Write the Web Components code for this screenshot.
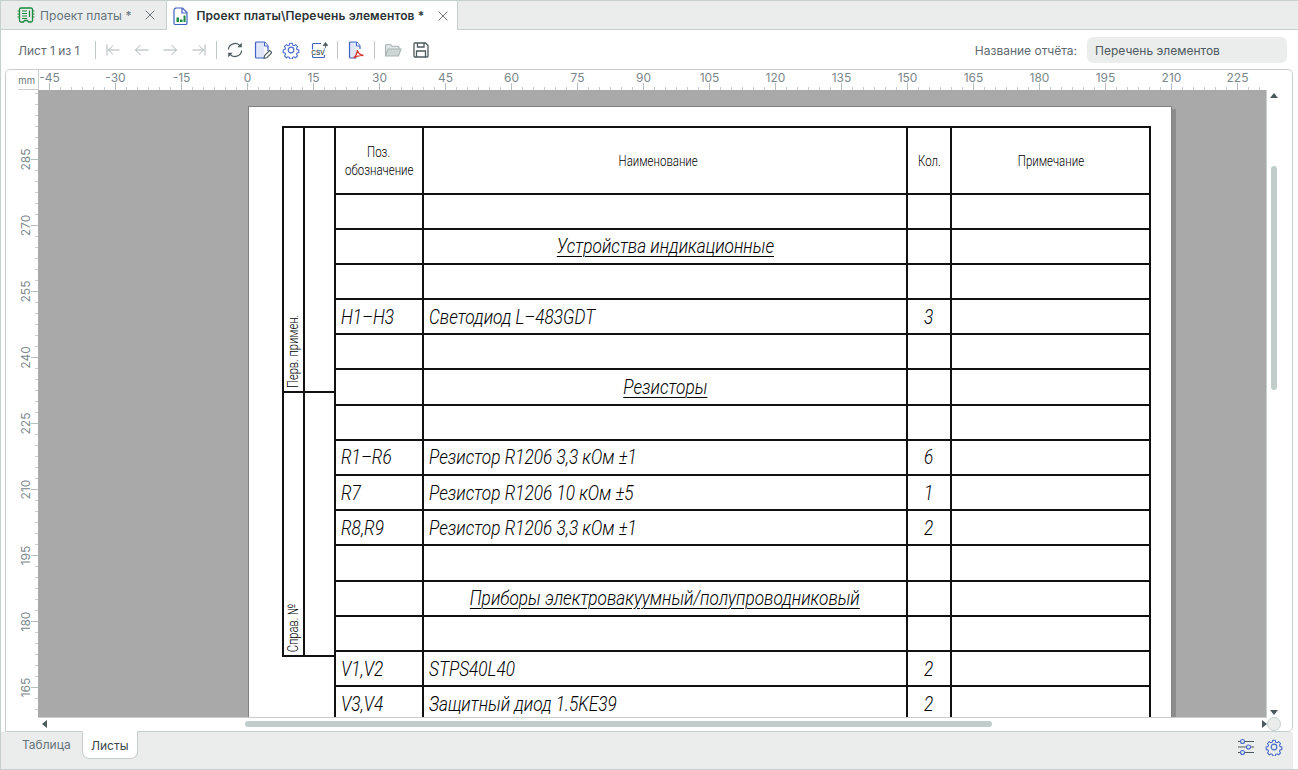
<!DOCTYPE html>
<html lang="ru">
<head>
<meta charset="utf-8">
<title>Перечень элементов</title>
<style>
    html, body { margin: 0; height: 100%; overflow: hidden; background: #fff; }
    body { font-family: Inter, "Liberation Sans", sans-serif; }
</style>
</head>
<body>
<app-window>
    <tab-bar slot="tabs">
        <doc-tab icon="board" label="Проект платы *"></doc-tab>
        <doc-tab icon="report" label="Проект платы\Перечень элементов *" active></doc-tab>
    </tab-bar>
    <report-toolbar slot="toolbar"></report-toolbar>
    <report-panel slot="panel">
        <sheet-page></sheet-page>
    </report-panel>
    <bottom-bar slot="bottom"></bottom-bar>
</app-window>

<script>
const ICONS = {
    board: `<path d="M4 2h10a1.500 1.500 0 0 1 1.500 1.500v11a1.500 1.500 0 0 1-1.500 1.500h-2.500l-1-1.500h-3l-1 1.500h-2.500a1.500 1.500 0 0 1-1.500-1.500v-11a1.500 1.500 0 0 1 1.500-1.500z" fill="none" stroke="#1b8a3c" stroke-width="1.300"/>
        <path d="M.5 5h2M.5 8h2M.5 11h2M15.500 5h2M15.500 8h2M15.500 11h2M5 5h5M5 7.500h5M5 10h5M12.500 4.500v6.500M5 12.500h5" fill="none" stroke="#1b8a3c" stroke-width="1.200"/>`,
    report: `<path d="M3.500 1h7l4.500 4.500v10.500a1.500 1.500 0 0 1-1.500 1.500h-10a1.500 1.500 0 0 1-1.500-1.500v-13a1.500 1.500 0 0 1 1.500-1.500z" fill="#fff" stroke="#3f62c4" stroke-width="1.200"/>
        <path d="M10 1v5h5" fill="none" stroke="#3f62c4" stroke-width="1.200"/>
        <path d="M4.500 10.500h2.500v4.500h-2.500zM8 12.500h2.500v2.500h-2.500zM11.500 8.500h2v6.500h-2z" fill="#1b8a3c"/>`,
    first: `<path d="M2 3.500v11M14.500 9h-11M8 4.500l-4.500 4.500 4.500 4.500" fill="none" stroke="#a9b3b5" stroke-width="1"/>`,
    prev: `<path d="M15.500 9h-13M7.500 4l-5 5 5 5" fill="none" stroke="#a9b3b5" stroke-width="1"/>`,
    next: `<path d="M2.500 9h13M10.500 4l5 5-5 5" fill="none" stroke="#a9b3b5" stroke-width="1"/>`,
    last: `<path d="M16 3.500v11M3.500 9h11M10 4.500l4.500 4.500-4.500 4.500" fill="none" stroke="#a9b3b5" stroke-width="1"/>`,
    refresh: `<path d="M2.300 8.500a6.800 6.800 0 0 1 11.900-3.600M15.700 9.500a6.800 6.800 0 0 1-11.900 3.600" fill="none" stroke="#4c5a5e" stroke-width="1.200"/>
        <path d="M15.800 1.800v4.500h-4.500zM2.200 16.200v-4.500h4.500z" fill="#4c5a5e"/>`,
    docedit: `<path d="M10.500 1h-8a1 1 0 0 0-1 1v14a1 1 0 0 0 1 1h7.500" fill="#dfe6f8" stroke="#3f62c4" stroke-width="1.200"/>
        <path d="M10.500 1l3.500 4v5" fill="#dfe6f8" stroke="#3f62c4" stroke-width="1.200"/>
        <path d="M10.500 1v4h3.500" fill="#fff" stroke="#3f62c4" stroke-width="1"/>
        <path d="M10 17.300l.6-2.800 5-5 2.200 2.200-5 5z" fill="#fff" stroke="#4c5a5e" stroke-width="1.100"/>`,
    gear: `<path d="M7.600 1.500h2.800l.5 2.100 1.400.6 1.900-1.100 2 2-1.100 1.900.6 1.400 2 .6v2.800l-2 .5-.6 1.400 1.100 1.900-2 2-1.900-1.100-1.400.6-.5 2h-2.800l-.5-2-1.400-.6-1.900 1.100-2-2 1.100-1.900-.6-1.400-2-.5v-2.800l2-.6.6-1.400-1.100-1.900 2-2 1.900 1.100 1.400-.6z" transform="translate(.9 .9) scale(.9)" fill="none" stroke="#4a6bcc" stroke-width="1.200"/>
        <circle cx="9" cy="9" r="2.800" fill="none" stroke="#4a6bcc" stroke-width="1.200"/>`,
    csv: `<path d="M11 2.500h-7.500a1 1 0 0 0-1 1v12a1 1 0 0 0 1 1h10a1 1 0 0 0 1-1v-8" fill="#fff" stroke="#3f62c4" stroke-width="1.100"/>
        <path d="M15.500 7v-4.500M13.200 4.600l2.300-3.100 2.300 3.100z" fill="#4c5a5e" stroke="#4c5a5e" stroke-width=".8"/>
        <rect x="1" y="8.500" width="14" height="5.500" fill="#fff"/>
        <text x="8" y="13.600" text-anchor="middle" font-family="Liberation Sans" font-weight="700" font-size="6.500" fill="#4c5a5e">CSV</text>`,
    pdf: `<path d="M9.500 1h-6a1 1 0 0 0-1 1v14a1 1 0 0 0 1 1h6" fill="#dfe6f8" stroke="#3f62c4" stroke-width="1.200"/>
        <path d="M9.500 1l3.500 4v3" fill="#dfe6f8" stroke="#3f62c4" stroke-width="1.200"/>
        <path d="M9.500 1v4h3.500" fill="#fff" stroke="#3f62c4" stroke-width="1"/>
        <path d="M6.500 17c2-1.500 3.500-4.500 4-8 .5 3 2.500 5 6 5.500-3.500-.5-7 .5-10 2.500z" fill="none" stroke="#d6382c" stroke-width="1.400"/>`,
    folder: `<path d="M1.500 15v-10.500a1 1 0 0 1 1-1h4l1.500 1.800h6a1 1 0 0 1 1 1v1.700" fill="#dfe5e4" stroke="#a9b5b5" stroke-width="1.100"/>
        <path d="M1.500 15l2.500-7h13l-2.500 7z" fill="#ccd5d3" stroke="#a9b5b5" stroke-width="1.100"/>`,
    save: `<path d="M3 2h10.500l2.500 2.500v10.500a1 1 0 0 1-1 1h-12a1 1 0 0 1-1-1v-12a1 1 0 0 1 1-1z" fill="none" stroke="#4c5a5e" stroke-width="1.300"/>
        <path d="M5.500 2v4h6.500v-4M4.500 16v-6h9v6" fill="none" stroke="#4c5a5e" stroke-width="1.300"/>`,
    sliders: `<path d="M1 3.500h16M1 9h16M1 14.500h16" fill="none" stroke="#4c5a5e" stroke-width="1"/>
        <circle cx="5.500" cy="3.500" r="2" fill="#dfe6f8" stroke="#4a6bcc" stroke-width="1.100"/>
        <circle cx="11.500" cy="9" r="2" fill="#dfe6f8" stroke="#4a6bcc" stroke-width="1.100"/>
        <circle cx="5.500" cy="14.500" r="2" fill="#dfe6f8" stroke="#4a6bcc" stroke-width="1.100"/>`,
    close: `<path d="M3 3l10 10M13 3l-10 10" fill="none" stroke="#5b676b" stroke-width="1"/>`
};

class UiIcon extends HTMLElement {
    connectedCallback() {
        const size = this.getAttribute("size") || 18;
        const box = this.getAttribute("name") === "close" ? 16 : 18;
        this.attachShadow({ mode: "open" });
        this.shadowRoot.innerHTML = `
            <style>:host { display: inline-flex; flex: none; width: ${size}px; height: ${size}px; } svg { display: block; }</style>
            <svg width="${size}" height="${size}" viewBox="0 0 ${box} ${box}">${ICONS[this.getAttribute("name")]}</svg>
        `;
    }
}
customElements.define("ui-icon", UiIcon);

class AppWindow extends HTMLElement {
    constructor() {
        super();
        this.attachShadow({ mode: "open" });
        this.shadowRoot.innerHTML = `
            <style>
                :host {
                    display: flex;
                    flex-direction: column;
                    box-sizing: border-box;
                    height: 770px;
                    border-left: 1px solid #c5d0ce;
                    border-bottom: 1px solid #c5d0ce;
                    border-top: 1px solid #c5d0ce;
                    background: #fff;
                }
            </style>
            <slot name="tabs"></slot>
            <slot name="toolbar"></slot>
            <slot name="panel"></slot>
            <slot name="bottom"></slot>
        `;
    }
}
customElements.define("app-window", AppWindow);

class TabBar extends HTMLElement {
    constructor() {
        super();
        this.attachShadow({ mode: "open" });
        this.shadowRoot.innerHTML = `
            <style>
                :host {
                    display: flex;
                    height: 28px;
                    flex: none;
                    background: #ebeded;
                    border-bottom: 1px solid #c5d0ce;
                    box-sizing: content-box;
                }
            </style>
            <slot></slot>
        `;
    }
}
customElements.define("tab-bar", TabBar);

class DocTab extends HTMLElement {
    connectedCallback() {
        const active = this.hasAttribute("active");
        this.attachShadow({ mode: "open" });
        this.shadowRoot.innerHTML = `
            <style>
                :host {
                    display: flex;
                    align-items: center;
                    height: ${active ? 29 : 28}px;
                    box-sizing: border-box;
                    padding: 0 ${active ? 7 : 9}px 0 ${active ? 5 : 16}px;
                    background: ${active ? "#fff" : "#ebeded"};
                    border-right: 1px solid #c5d0ce;
                    font-size: 12px;
                    letter-spacing: ${active ? ".09px" : ".06px"};
                    font-weight: ${active ? 600 : 400};
                    color: ${active ? "#2c3437" : "#66737a"};
                }
                span { margin: 0 12px 0 ${active ? 6 : 5}px; white-space: nowrap; }
            </style>
            <ui-icon name="${this.getAttribute("icon")}"></ui-icon>
            <span>${this.getAttribute("label")}</span>
            <ui-icon name="close" size="14"></ui-icon>
        `;
    }
}
customElements.define("doc-tab", DocTab);

class ReportToolbar extends HTMLElement {
    constructor() {
        super();
        this.attachShadow({ mode: "open" });
        this.shadowRoot.innerHTML = `
            <style>
                :host {
                    display: flex;
                    align-items: center;
                    flex: none;
                    box-sizing: border-box;
                    height: 39px;
                    padding: 1px 11px 0 17px;
                    font-size: 12px;
                    color: #5f6a70;
                }
                .sep { width: 1px; height: 18px; background: #bcc8c7; flex: none; }
                .grp { display: flex; gap: 10px; margin: 0 9px; }
                .fill { flex: 1; }
                .name {
                    width: 200px;
                    height: 26px;
                    margin-left: 10px;
                    padding-left: 8px;
                    box-sizing: border-box;
                    line-height: 27px;
                    border-radius: 6px;
                    background: #ebeded;
                    color: #4e5a60;
                }
            </style>
            <span style="width: 77px">Лист 1 из 1</span>
            <div class="sep"></div>
            <div class="grp">
                <ui-icon name="first"></ui-icon><ui-icon name="prev"></ui-icon><ui-icon name="next"></ui-icon><ui-icon name="last"></ui-icon>
            </div>
            <div class="sep"></div>
            <div class="grp">
                <ui-icon name="refresh"></ui-icon><ui-icon name="docedit"></ui-icon><ui-icon name="gear"></ui-icon><ui-icon name="csv"></ui-icon>
            </div>
            <div class="sep"></div>
            <div class="grp"><ui-icon name="pdf"></ui-icon></div>
            <div class="sep"></div>
            <div class="grp"><ui-icon name="folder"></ui-icon><ui-icon name="save"></ui-icon></div>
            <div class="fill"></div>
            <span>Название отчёта:</span>
            <div class="name">Перечень элементов</div>
        `;
    }
}
customElements.define("report-toolbar", ReportToolbar);

// ruler scale: 15 mm = 66 px, one tick every 11 px
class RulerTop extends HTMLElement {
    connectedCallback() {
        let marks = "";
        for (let i = 0; i * 11 + 11 <= 1222; i++) {
            const x = i * 11 + 10.5;
            const major = i % 6 === 0;
            marks += `<path d="M${x} ${major ? 13 : 17}V20" stroke="${major ? "#b4c0bf" : "#c5d0ce"}"/>`;
            if (major) {
                marks += `<text x="${x}" y="11.500" text-anchor="middle">${-45 + i * 2.5}</text>`;
            }
        }
        this.attachShadow({ mode: "open" });
        this.shadowRoot.innerHTML = `
            <style>
                :host { display: block; flex: 1; height: 20px; overflow: hidden; }
                svg { display: block; }
                text { font: 12px Inter, "Liberation Sans", sans-serif; fill: #7b888d; }
            </style>
            <svg width="1240" height="20">${marks}</svg>
        `;
    }
}
customElements.define("ruler-top", RulerTop);

class RulerLeft extends HTMLElement {
    connectedCallback() {
        let marks = "";
        for (let i = 0; i < 58; i++) {
            const y = 3.5 + i * 11;
            const major = i % 6 === 0 && i > 0;
            marks += `<path d="M${major ? 25 : 29} ${y}H32" stroke="${major ? "#b4c0bf" : "#c5d0ce"}"/>`;
            if (major) {
                marks += `<text transform="translate(24 ${y}) rotate(-90)" text-anchor="middle">${300 - i * 2.5}</text>`;
            }
        }
        this.attachShadow({ mode: "open" });
        this.shadowRoot.innerHTML = `
            <style>
                :host { display: block; flex: none; width: 32px; overflow: hidden; }
                svg { display: block; }
                text { font: 12px Inter, "Liberation Sans", sans-serif; fill: #7b888d; }
            </style>
            <svg width="32" height="640">${marks}</svg>
        `;
    }
}
customElements.define("ruler-left", RulerLeft);

class ReportPanel extends HTMLElement {
    constructor() {
        super();
        this.attachShadow({ mode: "open" });
        this.shadowRoot.innerHTML = `
            <style>
                :host {
                    display: grid;
                    grid-template-columns: 32px 1229px 18px 1fr;
                    grid-template-rows: 20px 628px 1fr;
                    flex: 1;
                    min-height: 0;
                    margin: 0 5px 0 4px;
                    border: 1px solid #c5d0ce;
                    border-radius: 5px 5px 5px 0;
                    background: #fff;
                    overflow: hidden;
                }
                .mm {
                    font-size: 9.500px;
                    color: #66737a;
                    text-align: right;
                    padding: 5px 3px 0 0;
                    box-sizing: border-box;
                    position: relative;
                }
                .mm::after {
                    content: "";
                    position: absolute;
                    left: 12px;
                    right: 0;
                    bottom: 0;
                    height: 1px;
                    background: #c5d0ce;
                }
                .top { grid-column: 2 / 5; display: flex; border-left: 1px solid #c5d0ce; }
                .canvas {
                    background: #a9a9a9;
                    overflow: hidden;
                    border-right: 1px solid #c5d0ce;
                    border-bottom: 1px solid #c5d0ce;
                    box-sizing: border-box;
                }
                .vbar { position: relative; }
                .vbar i, .hbar i { position: absolute; display: block; background: #c0cdcb; border-radius: 3px; }
                .vbar i { left: 4px; width: 6px; top: 76px; height: 224px; }
                .up, .down, .left, .right { position: absolute; width: 0; height: 0; border: 4px solid transparent; }
                .up { left: 3px; top: 3px; border-bottom: 5px solid #4c5a5e; border-top: 0; }
                .down { left: 3px; bottom: 3px; border-top: 5px solid #4c5a5e; border-bottom: 0; }
                .hbar { grid-column: 2 / 3; position: relative; }
                .hbar i { left: 207px; width: 747px; top: 3px; height: 6px; }
                .left { left: 4px; top: 2px; border-right: 5px solid #4c5a5e; border-left: 0; }
                .right { right: 0; top: 2px; border-left: 5px solid #4c5a5e; border-right: 0; }
                .corner { position: relative; }
                .corner b {
                    position: absolute;
                    left: 0;
                    top: -1px;
                    width: 12px;
                    height: 12px;
                    border-radius: 50%;
                    background: #ebeded;
                    border: 1px solid #c5d0ce;
                }
            </style>
            <div class="mm">mm</div>
            <div class="top"><ruler-top></ruler-top></div>
            <ruler-left></ruler-left>
            <div class="canvas"><slot></slot></div>
            <div class="vbar"><span class="up"></span><i></i><span class="down"></span></div>
            <div></div>
            <div></div>
            <div class="hbar"><span class="left"></span><i></i><span class="right"></span></div>
            <div class="corner"><b></b></div>
            <div></div>
        `;
    }
}
customElements.define("report-panel", ReportPanel);

// cell text in the drawing font, squeezed because no GOST type is installed
class GostText extends HTMLElement {
    constructor() {
        super();
        this.attachShadow({ mode: "open" });
        this.shadowRoot.innerHTML = `
            <style>
                :host {
                    display: inline-block;
                    font-family: Roboto, sans-serif;
                    font-weight: 300;
                    white-space: nowrap;
                    color: #000;
                }
            </style>
            <slot></slot>
        `;
    }
}
customElements.define("gost-text", GostText);

const ROWS = [
    [],
    ["", "Устройства индикационные", "", "t"],
    [],
    ["H1–H3", "Светодиод L–483GDT", "3"],
    [],
    ["", "Резисторы", "", "t"],
    [],
    ["R1–R6", "Резистор R1206 3,3 кОм ±1", "6"],
    ["R7", "Резистор R1206 10 кОм ±5", "1"],
    ["R8,R9", "Резистор R1206 3,3 кОм ±1", "2"],
    [],
    ["", "Приборы электровакуумный/полупроводниковый", "", "t"],
    [],
    ["V1,V2", "STPS40L40", "2"],
    ["V3,V4", "Защитный диод 1.5KE39", "2"],
    []
];

class SheetPage extends HTMLElement {
    connectedCallback() {
        let cells = "";
        for (const [pos, name, qty, kind] of ROWS) {
            const nameClass = kind === "t" ? "c title" : "c val";
            cells += `<div class="c val">${pos ? `<gost-text class="it">${pos}</gost-text>` : ""}</div>
                <div class="${nameClass}">${name ? `<gost-text class="it">${name}</gost-text>` : ""}</div>
                <div class="c val mid">${qty ? `<gost-text class="it">${qty}</gost-text>` : ""}</div>
                <div class="c"></div>`;
        }
        this.attachShadow({ mode: "open" });
        this.shadowRoot.innerHTML = `
            <style>
                :host {
                    display: block;
                    position: relative;
                    box-sizing: border-box;
                    width: 924px;
                    height: 1300px;
                    margin: 16px 0 0 210px;
                    padding: 19px 0 0 33px;
                    background: #fff;
                    border-top: 1px solid #808080;
                    border-left: 1px solid #808080;
                    border-right: 1px solid #808080;
                    box-shadow: 4px 3px 0 #8c8c8c;
                }
                .sheet { display: flex; align-items: flex-start; }
                .side {
                    display: grid;
                    grid-template-columns: 21px 31px;
                    grid-template-rows: 264.500px 264px;
                    flex: none;
                    border-top: 2px solid #111;
                    border-left: 2px solid #111;
                }
                .side > div {
                    border-right: 2px solid #111;
                    border-bottom: 2px solid #111;
                    box-sizing: border-box;
                    display: flex;
                    justify-content: center;
                    align-items: flex-end;
                    padding-bottom: 2px;
                }
                .v { writing-mode: vertical-rl; text-orientation: sideways; transform: rotate(180deg); font-size: 14.500px; line-height: 16px; }
                .v gost-text { transform: scaleY(.77); transform-origin: center top; }
                .grid {
                    display: grid;
                    grid-template-columns: 88px 484px 44px 199px;
                    grid-template-rows: 66.500px repeat(16, 35.200px);
                    border-top: 2px solid #111;
                    border-left: 2px solid #111;
                    margin-left: -2px;
                }
                .c {
                    box-sizing: border-box;
                    border-right: 2px solid #111;
                    border-bottom: 2px solid #111;
                    display: flex;
                    align-items: center;
                    justify-content: center;
                    min-width: 0;
                    overflow: hidden;
                }
                .head { font-size: 14.500px; text-align: center; line-height: 18px; flex-direction: column; padding-top: 4px; }
                .head gost-text { transform: scaleX(.79); }
                .head.name { padding-right: 14px; }
                .val { justify-content: flex-start; padding-left: 5px; }
                .mid { justify-content: center; padding-left: 0; }
                .it { font-size: 21px; font-style: italic; transform-origin: left center; transform: scaleX(.82); }
                .mid .it { transform-origin: center; }
                .title .it { text-decoration: underline; text-underline-offset: 3px; text-decoration-thickness: 1px; transform-origin: center; }
            </style>
            <div class="sheet">
                <div class="side">
                    <div><span class="v"><gost-text>Перв. примен.</gost-text></span></div><div></div>
                    <div><span class="v"><gost-text>Справ. №</gost-text></span></div><div></div>
                </div>
                <div class="grid">
                    <div class="c head"><gost-text>Поз.</gost-text><gost-text>обозначение</gost-text></div>
                    <div class="c head name"><gost-text>Наименование</gost-text></div>
                    <div class="c head"><gost-text>Кол.</gost-text></div>
                    <div class="c head"><gost-text>Примечание</gost-text></div>
                    ${cells}
                </div>
            </div>
        `;
    }
}
customElements.define("sheet-page", SheetPage);

class BottomBar extends HTMLElement {
    constructor() {
        super();
        this.attachShadow({ mode: "open" });
        this.shadowRoot.innerHTML = `
            <style>
                :host {
                    display: flex;
                    align-items: flex-start;
                    flex: none;
                    height: 37px;
                    width: 1292px;
                    background: #ebeded;
                    font-size: 12px;
                    color: #66737a;
                }
                .tab { height: 28px; line-height: 27px; box-sizing: border-box; margin-top: -1px; }
                .on {
                    background: #fff;
                    color: #3c474c;
                    border: 1px solid #c5d0ce;
                    border-top-color: #fff;
                    border-radius: 0 0 7px 7px;
                    padding: 0 8px;
                }
                .fill { flex: 1; }
                .icons { display: flex; gap: 10px; margin: 6px 10px 0 0; }
            </style>
            <div class="tab" style="margin-left: 21px; width: 60px">Таблица</div>
            <div class="tab on">Листы</div>
            <div class="fill"></div>
            <div class="icons"><ui-icon name="sliders"></ui-icon><ui-icon name="gear"></ui-icon></div>
        `;
    }
}
customElements.define("bottom-bar", BottomBar);
</script>
</body>
</html>
